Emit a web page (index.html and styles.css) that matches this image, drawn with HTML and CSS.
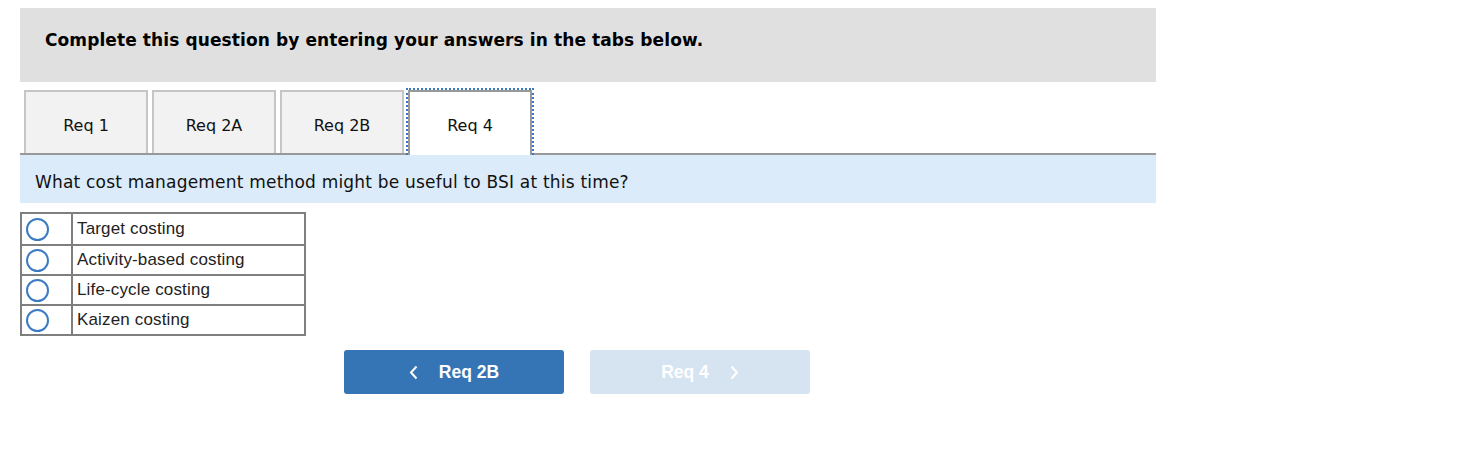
FILE: index.html
```html
<!DOCTYPE html>
<html>
<head>
<meta charset="utf-8">
<link rel="stylesheet" href="styles.css">
</head>
<body>
<div class="page">
  <div class="header">Complete this question by entering your answers in the tabs below.</div>
  <div class="tabs">
    <div class="tab">Req 1</div>
    <div class="tab">Req 2A</div>
    <div class="tab">Req 2B</div>
    <div class="tab active">Req 4</div>
  </div>
  <div class="question">What cost management method might be useful to BSI at this time?</div>
  <table class="options">
    <tr class="first"><td class="radio"><span class="circle"></span></td><td class="label">Target costing</td></tr>
    <tr><td class="radio"><span class="circle"></span></td><td class="label">Activity-based costing</td></tr>
    <tr><td class="radio"><span class="circle"></span></td><td class="label">Life-cycle costing</td></tr>
    <tr><td class="radio"><span class="circle"></span></td><td class="label">Kaizen costing</td></tr>
  </table>
  <div class="nav">
    <div class="btn prev"><svg class="chev" width="9" height="15" viewBox="0 0 9 15"><path d="M7.5 1.5 L2 7.5 L7.5 13.5" fill="none" stroke="#fff" stroke-width="2"/></svg><span>Req 2B</span></div>
    <div class="btn next"><span>Req 4</span><svg class="chev" width="9" height="15" viewBox="0 0 9 15"><path d="M1.5 1.5 L7 7.5 L1.5 13.5" fill="none" stroke="#fff" stroke-width="2"/></svg></div>
  </div>
</div>
</body>
</html>
```

FILE: styles.css
```css
body {
  margin: 0;
  background: #fff;
}
.page {
  padding: 8px 0 0 20px;
  width: 1136px;
  font-family: "DejaVu Sans", Verdana, sans-serif;
  color: #000;
}
.header {
  box-sizing: border-box;
  height: 74px;
  background: #e0e0e0;
  padding: 22px 0 0 25px;
  font-size: 17px;
  letter-spacing: 0.1px;
  font-weight: bold;
  line-height: 21px;
}
.tabs {
  display: flex;
  margin-top: 8px;
  border-bottom: 2px solid #999;
  height: 63px;
}
.tab {
  box-sizing: border-box;
  position: relative;
  width: 124px;
  height: 63px;
  margin-left: 4px;
  border: 2px solid #c6c6c6;
  border-bottom: none;
  background: #f2f2f2;
  display: flex;
  align-items: center;
  justify-content: center;
  padding-top: 5px;
  font-size: 16px;
  color: #111;
}
.tab.active {
  height: 65px;
  background: #fff;
  border-color: #999;
  padding-top: 3px;
}
.tab.active::before {
  content: "";
  position: absolute;
  left: -4px;
  right: -4px;
  top: -4px;
  bottom: 0;
  border: 2px dotted #3a78c0;
  border-bottom: none;
}
.question {
  box-sizing: border-box;
  height: 48px;
  background: #dbebf9;
  padding: 17px 0 0 15px;
  font-size: 17px;
  letter-spacing: 0.2px;
  line-height: 20px;
  color: #111;
}
.options {
  margin-top: 9px;
  border-collapse: collapse;
  border: 2px solid #7f7f7f;
  width: 286px;
  font-family: "Liberation Sans", Arial, sans-serif;
  font-size: 17px;
  letter-spacing: 0.15px;
  color: #222;
}
.options td {
  border: 2px solid #7f7f7f;
  padding: 0;
  height: 28px;
}
.options tr.first td {
  height: 30px;
}
.options td.radio {
  width: 49px;
  vertical-align: middle;
}
.circle {
  display: block;
  box-sizing: border-box;
  width: 23px;
  height: 23px;
  margin-left: 4px;
  border: 2px solid #3b7bc4;
  border-radius: 50%;
}
.options td.label {
  padding-left: 4px;
  vertical-align: middle;
}
.nav {
  display: flex;
  gap: 26px;
  margin: 14px 0 0 324px;
}
.btn {
  width: 220px;
  height: 44px;
  border-radius: 3px;
  display: flex;
  align-items: center;
  justify-content: center;
  gap: 21px;
  font-family: "Liberation Sans", Arial, sans-serif;
  font-weight: bold;
  font-size: 17.5px;
  color: #fff;
}
.btn.prev {
  background: #3575b5;
}
.btn.next {
  background: #d6e4f1;
}
.chev {
  display: block;
}
```
